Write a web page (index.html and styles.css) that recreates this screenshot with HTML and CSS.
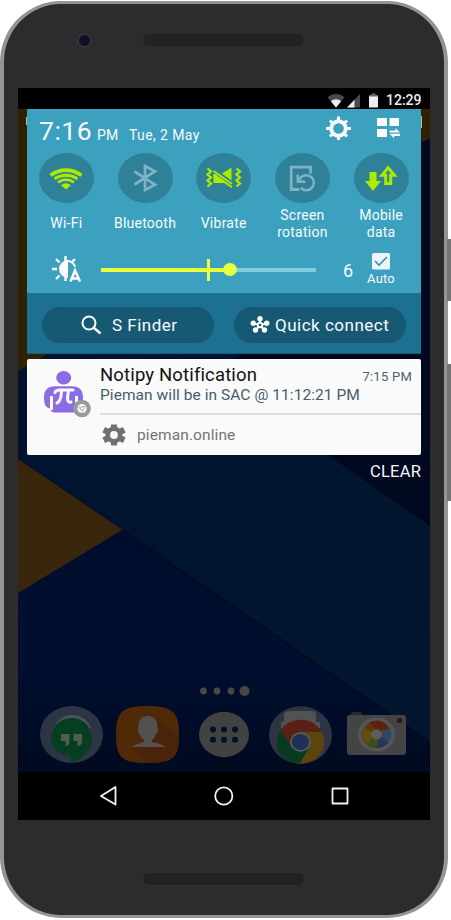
FILE: index.html
```html
<!DOCTYPE html>
<html lang="en">
<head>
<meta charset="utf-8">
<title>Notification shade</title>
<link rel="stylesheet" href="styles.css">
</head>
<body>
<div class="phone">
  <i class="side-button power"></i>
  <i class="side-button volume"></i>
  <div class="bezel top"><i class="camera"></i><i class="speaker"></i></div>
  <main class="screen">
    <svg class="wallpaper" viewBox="18 109 412 663" aria-hidden="true">
      <defs>
        <linearGradient id="lower" x1="0" y1="0" x2="0" y2="1"><stop offset="0" stop-color="#000c2c"/><stop offset=".55" stop-color="#000f30"/><stop offset="1" stop-color="#000a20"/></linearGradient>
        <linearGradient id="band" x1="0" y1="0" x2="1" y2="1"><stop offset="0" stop-color="#00112d"/><stop offset="1" stop-color="#02172f"/></linearGradient>
      </defs>
      <path fill="url(#band)" d="M18 109h412v663H18z"/>
      <path fill="#000820" d="M430 109v417L220 380l201-250z"/>
      <path fill="#2f2203" d="M18 109h412v29L18 371z"/>
      <path fill="url(#lower)" d="M18 593l104-63 308 212v30H18z"/>
      <path fill="#38270a" d="M18 459l104 71-104 63z"/>
      <path stroke="#40220a" stroke-width="3" opacity=".7" d="M18 461l102 69"/>
      <path stroke="#000a1c" stroke-width="1.5" d="M122 530l308 212"/>
      <path stroke="#bbb" d="M26.500 117v8M421.500 116v12"/>
    </svg>
    <header class="status">
      <svg width="52" height="16" viewBox="328 92 52 16"><path fill="#4c4c4c" d="M328.500 96.200Q337 90 345.500 96.200L337 106.500z"/><path fill="#eee" d="M331.800 100.200Q337 96.500 342.200 100.200L337 106.500z"/><path fill="#4c4c4c" d="M361 93v13.500h-13z"/><path fill="#eee" d="M355.500 98.700v7.800H348z"/><path fill="#666" d="M372.500 92.500h4V94h2.500v3h-9v-3h2.500z"/><path fill="#eee" d="M370 95.500h9v11h-9z"/></svg>
      <span class="clock">12:29</span>
    </header>
    <section class="shade">
      <div class="heading">
        <span class="time">7:16</span><span class="meridiem">PM</span><span class="date">Tue, 2 May</span>
        <svg class="tools" width="76" height="24" viewBox="326 116 76 24"><g transform="translate(338.500 128.500)"><circle r="7.300" fill="none" stroke="#fafafa" stroke-width="4"/><path stroke="#fafafa" stroke-width="3" d="M0-12v4M0 8v4M-12.500 0h4M8.500 0h4M-8.500-8l3 3M8.500-8l-3 3M-8.500 8l3-3M8.500 8l-3-3"/></g><path fill="#fafafa" d="M377 118h10v8h-10zM389.500 118H399v8h-9.500zM377 129h10v8h-10zM389.500 130.500h6V128l4.500 4.600h-10.500zM400 133.800h-10.500l4.500 4.400v-2.300h6z"/></svg>
      </div>
      <div class="toggles">
        <div class="toggle"><i><svg width="36" height="26" viewBox="-18 -13 36 26"><g fill="none" stroke="#aaeb00"><path stroke-width="3.600" d="M-15.500-2.800Q0-12.800 15.500-2.800"/><path stroke-width="2.800" d="M-11.500.8Q0-6.300 11.500.8"/><path stroke-width="2.600" d="M-8 4.300Q0-1 8 4.300"/></g><path fill="#aaeb00" d="M-5 7.200Q0 3.500 5 7.200L0 11.500z"/></svg></i><span>Wi-Fi</span></div>
        <div class="toggle"><i><svg width="30" height="30" viewBox="-15 -15 30 30"><path fill="none" stroke="#7db3c5" stroke-width="2.700" d="M-10.500-6.500L10 6.700 0 12V-12L10-6.700-10.500 6.500"/></svg></i><span>Bluetooth</span></div>
        <div class="toggle"><i><svg width="38" height="26" viewBox="-19 -13 38 26"><path fill="none" stroke="#aaeb00" stroke-width="2.300" d="M-16.500-9.500l3.500 3-3.500 3 3.500 3-3.500 3 3.500 3-3.500 3M12.500-9.500l3.500 3-3.500 3 3.500 3-3.500 3 3.500 3-3.500 3"/><path fill="#aaeb00" d="M-10.500-4h3L3.500 5H-10.500zM7.500-10.500V4.500L-3.500-3.500z"/><path stroke="#2f8198" stroke-width="4.500" d="M-10-7.500L8 5.500"/><path stroke="#aaeb00" stroke-width="2" d="M-10.500-7L8 6M-10.500-3.500L8 9.300"/></svg></i><span>Vibrate</span></div>
        <div class="toggle"><i><svg width="30" height="30" viewBox="-15 -15 30 30"><g fill="none" stroke="#7db3c5" stroke-width="2.800"><path d="M-2.500 11.500h-8.300v-22.300H8.500v6.300"/><path stroke-width="2.500" d="M-3 3A7.500 7.500 0 1 1-1 10M-4.200-3.500v7.200H3.500"/></g></svg></i><span>Screen<br>rotation</span></div>
        <div class="toggle"><i><svg width="36" height="28" viewBox="-18 -14 36 28"><path fill="#aaeb00" d="M-11.500-6h7v9h4.500L-8 13-16 3h4.500z"/><path fill="none" stroke="#aaeb00" stroke-width="3" d="M7.200-10.200L1-2.800h3.700v8.300h5v-8.300h3.700z"/></svg></i><span>Mobile<br>data</span></div>
      </div>
      <div class="brightness">
        <svg class="sun" width="32" height="28" viewBox="51 255 32 28"><g stroke="#fafafa" stroke-width="2.400"><path d="M65.500 256v5M52 269h5M56 259l3.500 3.500M75 259l-3 3M56 279l3.500-3.500M65.500 277v4"/></g><path fill="#fafafa" d="M68 260a9 9 0 0 0 0 18z"/><path fill="none" stroke="#fafafa" stroke-width="2" d="M66 260.800q7 0 9 6"/><path fill="none" stroke="#fafafa" stroke-width="2.600" d="M70.500 281.500l4.500-11 5 11M72 278.500h6.500"/></svg>
        <div class="slider"><b></b><i class="tick"></i><i class="knob"></i></div>
        <span class="level">6</span>
        <div class="auto"><svg width="18" height="17" viewBox="0 0 18 17"><rect width="18" height="16.500" rx="1.500" fill="#edf3f6"/><path fill="none" stroke="#3694b4" stroke-width="1.700" d="M3 8l4 4 8-8"/></svg><span>Auto</span></div>
      </div>
      <div class="shortcuts">
        <div class="pill finder"><svg width="22" height="20" viewBox="0 0 22 20"><ellipse cx="8" cy="8" rx="6.500" ry="6.500" fill="none" stroke="#fafafa" stroke-width="2"/><path stroke="#fafafa" stroke-width="2.500" d="M12.500 12.500l7 6"/></svg><span>S Finder</span></div>
        <div class="pill connect"><svg width="20" height="18" viewBox="-10 -9 20 18"><path fill="none" stroke="#fafafa" stroke-width="2" d="M0-6V0M-7-1.500L0 0 7-1.500M-4.500 5.500L0 0l4.500 5.500"/><g fill="#fafafa"><circle cy="-6.200" r="2.700"/><circle cx="-6.700" cy="-1.700" r="2.700"/><circle cx="6.700" cy="-1.700" r="2.700"/><circle cx="-4.500" cy="5" r="2.700"/><circle cx="4.500" cy="5" r="2.700"/><circle r="3.200"/></g><circle r="1.300" fill="#175973"/></svg><span>Quick connect</span></div>
      </div>
    </section>
    <article class="notice">
      <svg class="avatar" width="52" height="50" viewBox="42 368 52 50"><ellipse cx="63.700" cy="377.800" rx="7.500" ry="6.800" fill="#8b6be6"/><path fill="#8b6be6" d="M44 397c0-7 4-10.800 11-10.800h17c7 0 11 3.800 11 10.800v10h-3.500c-1 4-3 5.500-7 5.500H55c-3 0-4.500-1.500-5-4-4-1-6-3.500-6-11.500z"/><path stroke="#fafafa" stroke-width="3" d="M51.500 396v14M76.500 396v10"/><path fill="none" stroke="#fafafa" stroke-width="3" stroke-linecap="round" d="M55 392.500c1-3.500 4-2.500 7-2.500h11M61.500 391c-.2 6-1.500 10.500-4.500 12M68.500 391c-1.500 8-1.500 12 2.500 11"/><circle cx="82" cy="408.500" r="8.800" fill="#9a9a9a"/><circle cx="82" cy="408.500" r="4.600" fill="#fafafa"/><circle cx="82" cy="408.500" r="1.800" fill="#fafafa" stroke="#9a9a9a" stroke-width=".7"/><path stroke="#9a9a9a" stroke-width=".7" d="M82 406.500h4M80.500 409.500l-2-3.500M83.500 409.500l-2 3.500"/></svg>
      <div class="copy">
        <div class="title-row"><h1>Notipy Notification</h1><time>7:15 PM</time></div>
        <p>Pieman will be in SAC @ 11:12:21 PM</p>
        <div class="source"><svg width="24" height="24" viewBox="-12 -12 24 24"><circle r="6.200" fill="none" stroke="#707070" stroke-width="4.600"/><path stroke="#707070" stroke-width="6" d="M0-10.500v4M0 6.500v4M-10.300-5.300l4 2M10.300-5.300l-4 2M-10.300 5.300l4-2M10.300 5.300l-4-2"/></svg><span>pieman.online</span></div>
      </div>
    </article>
    <div class="clear"><span>CLEAR</span></div>
    <svg class="home" width="412" height="90" viewBox="18 682 412 90" role="img" aria-label="Home screen dock">
      <g fill="#484848"><circle cx="203.500" cy="691" r="3.400"/><circle cx="217" cy="691" r="3.400"/><circle cx="231" cy="691" r="3.400"/><circle cx="244.500" cy="691" r="5"/></g>
      <ellipse cx="71.500" cy="734.500" rx="31.500" ry="28.500" fill="#2d3445"/>
      <path fill="#505356" d="M51 752q4-2 4-5-7-12-1-20 7-13 19-12 13 1 18 13z"/>
      <path fill="#063e22" d="M71 763v-7c-12-1-20-8-20-18 0-11 9-20 20.500-20S92 727 92 738c0 12-10 21-21 25z"/>
      <path fill="#515c55" d="M61 734h8.500v7q0 5-4 5v-5H61zM73.500 734H82v7q0 5-4.500 5v-5h-4z"/>
      <path fill="#502a07" d="M116 735c0-22 5-29 31.500-29S179 713 179 735s-5 28-31.500 28S116 757 116 735z"/>
      <path fill="#4a2308" d="M155 718l23 18c0 19-6 27-30 27l-18-15 15-6z"/>
      <path fill="#515151" d="M147.500 716c-7 0-10 5-9 12-2 2 0 5 1 6q2 5 4.500 6v2q-10 3-13.500 5h35q-3-3-13.500-5v-2q3-2 4-6 4-4 1.500-6c1-7-3-12-10-12z"/>
      <ellipse cx="224" cy="734.500" rx="25" ry="22.700" fill="#424242"/>
      <g fill="#001029"><circle cx="213" cy="729.500" r="3"/><circle cx="224" cy="729.500" r="3"/><circle cx="235" cy="729.500" r="3"/><circle cx="213" cy="739.700" r="3"/><circle cx="224" cy="739.700" r="3"/><circle cx="235" cy="739.700" r="3"/></g>
      <ellipse cx="300.500" cy="735" rx="31.500" ry="28.800" fill="#2d3445"/>
      <path fill="#525252" d="M281 741v-19h3v-7q0-4 5-4h22q5 0 5 4v7h4v22z"/>
      <g transform="translate(300.500 742)"><ellipse rx="24" ry="21.700" fill="#5b450e"/><path fill="#5a1f15" d="M-20-12C-10-26 13-26 21-10H0L-10 4z"/><path fill="#083a20" d="M-20-12C-29 3-22 20-1 21.700L9 5H-9z"/><ellipse rx="10.500" ry="9.700" fill="#5b5b5b"/><ellipse rx="8.700" ry="8" fill="#1e3157"/></g>
      <rect x="351" y="712" width="11" height="6" rx="2" fill="#25292a"/>
      <rect x="347" y="715" width="59" height="40" rx="3" fill="#444"/><circle cx="399.500" cy="720.500" r="2.700" fill="#202020"/>
      <g transform="translate(376.500 734.500)"><ellipse rx="18.500" ry="17" fill="#555"/><ellipse rx="14.800" ry="13.500" fill="#3c4e16"/><path fill="#602015" d="M-7-12Q5-18 13-6L0-3z"/><path fill="#63330b" d="M-7-12L0-3-5 3-13-6z"/><path fill="#65500b" d="M-13-7L-3-1-8 8-14 4z"/><path fill="#2c496b" d="M13-6Q17 2 12 8L3 0z"/><path fill="#24345d" d="M12 8Q8 13 0 13.500L3 1z"/><ellipse rx="5.500" ry="5" fill="#5d5d5d"/></g>
    </svg>
    <nav class="nav">
      <svg width="412" height="48" viewBox="18 772 412 48"><g fill="none" stroke="#f1f1f1" stroke-width="1.800" stroke-linejoin="round"><path d="M115.500 787v17.500L101 796z"/><circle cx="223.800" cy="796" r="8.600"/><rect x="332.500" y="788.500" width="15" height="15"/></g></svg>
    </nav>
  </main>
  <div class="bezel bottom"><i class="speaker"></i></div>
</div>
</body>
</html>
```
FILE: styles.css
```css
* { box-sizing: border-box; }
body { margin: 0; background: #fff; font-family: Roboto, sans-serif; height: 920px; overflow: hidden; padding-top: 1px; }
svg { display: block; flex: none; }
.phone { position: relative; width: 448px; height: 917px; background: #2d2b2d; border: 3px solid #949494; border-left-width: 4px; border-right-width: 4px; border-radius: 61px; }
.side-button { position: absolute; left: 443px; width: 5px; background: #747474; }
.power { top: 235px; height: 62px; }
.volume { top: 360px; height: 137px; }
.bezel { display: flex; align-items: center; }
.bezel.top { height: 84px; padding: 0 0 12px 73px; }
.bezel.bottom { height: 95px; padding: 23px 0 0 138px; }
.camera { width: 15px; height: 15px; border: 2.500px solid #343437; border-radius: 50%; background: #160e29; margin-right: 50px; }
.speaker { width: 163px; height: 14px; border-radius: 7px; background: #232122; border: 1px solid #302e2f; }
.screen { position: relative; width: 412px; height: 732px; margin-left: 14px; background: #000; display: flex; flex-direction: column; }
.wallpaper { position: absolute; left: 0; top: 21px; width: 412px; height: 663px; }
.status { position: relative; height: 21px; background: #000; display: flex; justify-content: flex-end; align-items: center; padding: 3px 9px 0 0; color: #eee; gap: 7px; }
.status svg { margin-top: 1px; }
.clock { font-size: 14px; font-weight: 500; line-height: 16px; width: 35px; white-space: nowrap; }
.shade { position: relative; width: 394px; height: 245px; margin-left: 9px; background: #3ca0bf; color: #f7fbfc; border-radius: 0 0 2px 2px; overflow: hidden; }
.heading { display: flex; height: 44px; align-items: baseline; padding: 7px 19px 0 12px; line-height: 30px; white-space: nowrap; }
.time { font-size: 26.500px; width: 58px; letter-spacing: .5px; }
.meridiem { font-size: 14px; width: 32px; letter-spacing: .2px; }
.date { font-size: 14px; letter-spacing: .4px; flex: 1; }
.tools { align-self: flex-start; }
.toggles { display: grid; grid-template-columns: repeat(5, 78.700px); height: 90px; }
.toggle { display: flex; flex-direction: column; align-items: center; font-size: 14px; letter-spacing: .25px; line-height: 17.500px; text-align: center; }
.toggle i { width: 55px; height: 50px; border-radius: 50%; background: #2f8198; display: flex; align-items: center; justify-content: center; }
.toggle span { height: 42px; display: flex; align-items: center; }
.brightness { display: flex; height: 50px; padding-left: 24px; }
.sun { margin-top: 12px; }
.slider { position: relative; width: 215px; height: 4px; margin: 25px 0 0 18px; background: #7fcddd; }
.slider b { display: block; width: 128px; height: 4px; background: #e9ff3f; }
.tick { position: absolute; left: 106px; top: -9px; width: 3px; height: 22px; background: #e9ff3f; }
.knob { position: absolute; left: 122px; top: -5px; width: 14px; height: 13px; border-radius: 50%; background: #e9ff3f; }
.level { font-size: 18px; line-height: 20px; margin: 18px 0 0 27px; width: 23px; }
.auto { width: 30px; display: flex; flex-direction: column; align-items: center; padding-top: 10px; font-size: 13px; line-height: 17px; letter-spacing: .2px; }
.shortcuts { height: 61px; background: #1c7092; border-top: 1px solid #217593; box-shadow: inset 0 -1px #175e7c; display: flex; gap: 20px; padding: 13px 15px 0; font-size: 17px; }
.pill { width: 172px; height: 36px; border-radius: 18px; background: #175973; display: flex; align-items: center; white-space: nowrap; }
.finder { padding-left: 39px; gap: 9px; font-size: 17px; letter-spacing: .5px; }
.connect { padding-left: 16px; gap: 5px; font-size: 17px; letter-spacing: .5px; }
.notice { position: relative; width: 394px; height: 96px; margin: 5px 0 0 9px; background: #fafafa; border-radius: 2px; display: flex; padding-left: 15px; }
.avatar { margin-top: 9px; }
.copy { flex: 1; padding-left: 6px; padding-top: 5px; }
.title-row { display: flex; justify-content: space-between; align-items: baseline; padding: 1px 9px 0 0; height: 21px; line-height: 21px; }
h1 { margin: 0; font-size: 18.500px; font-weight: 400; color: #111; letter-spacing: .15px; white-space: nowrap; }
time { font-size: 13px; color: #4d6270; letter-spacing: .25px; }
p { margin: 0; height: 28px; line-height: 20px; font-size: 15.500px; color: #465d6d; letter-spacing: .06px; white-space: nowrap; }
.source { border-top: 2px solid #ddd; display: flex; align-items: center; height: 42px; padding-left: 2px; gap: 11px; font-size: 15.500px; color: #747474; }
.source span { letter-spacing: .1px; }
.clear { position: relative; height: 35px; padding: 7px 9px 0 0; text-align: right; color: #f5f5f5; font-size: 16.500px; letter-spacing: .2px; line-height: 20px; }
.home { position: relative; margin-top: auto; }
.nav { position: relative; height: 48px; background: #000; }
```
